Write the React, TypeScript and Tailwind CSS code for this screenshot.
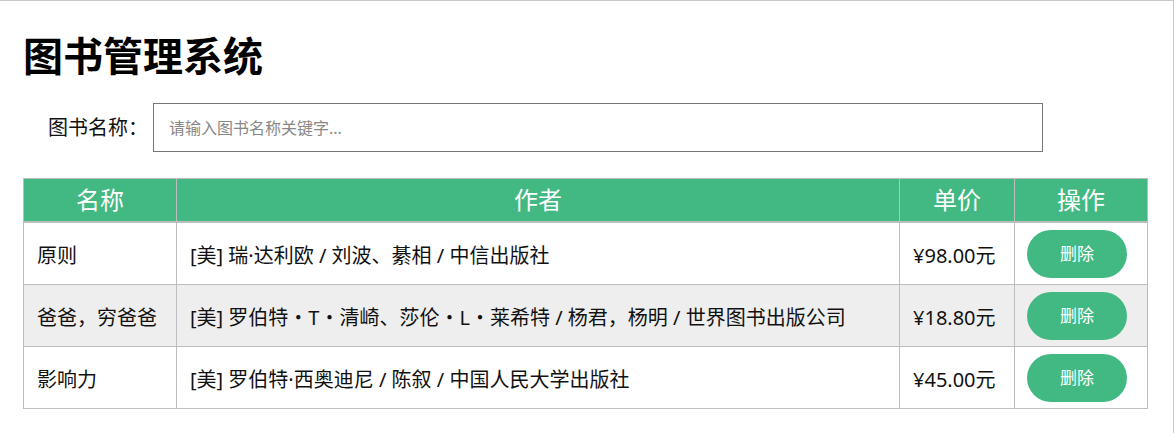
const BOOKS = [
  { name: "原则", author: "[美] 瑞·达利欧 / 刘波、綦相 / 中信出版社", price: "¥98.00元" },
  {
    name: "爸爸，穷爸爸",
    author: "[美] 罗伯特・T・清崎、莎伦・L・莱希特 / 杨君，杨明 / 世界图书出版公司",
    price: "¥18.80元",
  },
  { name: "影响力", author: "[美] 罗伯特·西奥迪尼 / 陈叙 / 中国人民大学出版社", price: "¥45.00元" },
];

export default function App() {
  return (
    <div className="w-[1174px] h-[433px] bg-white border-t border-r border-[#c8c8c8] text-[#111] font-['Noto_Sans','Noto_Sans_CJK_SC',sans-serif]">
      <div className="pl-[23px]">
        <h1 className="pt-[29px] text-[40px] leading-[48px] font-bold text-black font-['Noto_Sans_CJK_SC',sans-serif]">
          图书管理系统
        </h1>

        <div className="mt-[25px] flex items-center">
          <label className="ml-[25px] w-[105px] text-[20px] leading-[28px]">图书名称：</label>
          <input
            type="text"
            placeholder="请输入图书名称关键字..."
            className="w-[890px] h-[49px] border border-[#767676] px-[15px] text-[16px] placeholder:text-[#888] outline-none"
          />
        </div>

        <table className="mt-[26px] w-[1124px] table-fixed border-collapse border border-[#bdbdbd]">
          <colgroup>
            <col className="w-[153px]" />
            <col className="w-[723px]" />
            <col className="w-[115px]" />
            <col className="w-[133px]" />
          </colgroup>
          <thead>
            <tr className="bg-[#42b983] text-white">
              {["名称", "作者", "单价", "操作"].map((h) => (
                <th
                  key={h}
                  className="h-[43px] border border-b-2 border-[#bdbdbd] text-[24px] font-normal leading-[32px] text-center"
                >
                  {h}
                </th>
              ))}
            </tr>
          </thead>
          <tbody>
            {BOOKS.map((book, i) => (
              <tr key={book.name} className={i === 1 ? "bg-[#eeeeee]" : "bg-white"}>
                <td className="border border-[#bdbdbd] px-[13px] pt-[9px] pb-[4px] text-[20px] leading-[28px] whitespace-nowrap">{book.name}</td>
                <td className="border border-[#bdbdbd] px-[13px] pt-[9px] pb-[4px] text-[20px] leading-[28px] whitespace-nowrap">{book.author}</td>
                <td className="border border-[#bdbdbd] px-[13px] pt-[9px] pb-[4px] text-[20px] leading-[28px] whitespace-nowrap">{book.price}</td>
                <td className="border border-[#bdbdbd] px-[12px] pt-[7px] pb-[6px]">
                  <button className="w-[100px] h-[48px] rounded-full bg-[#42b983] text-white text-[17px]">删除</button>
                </td>
              </tr>
            ))}
          </tbody>
        </table>
      </div>
    </div>
  );
}
